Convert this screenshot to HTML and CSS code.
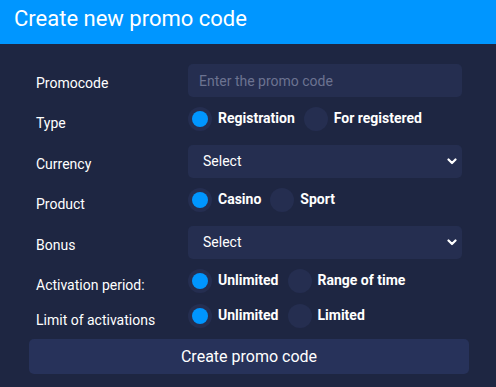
FILE: index.html
```html
<!DOCTYPE html>
<html lang="en">
<head>
<meta charset="utf-8">
<title>Create new promo code</title>
<link rel="stylesheet" href="styles.css">
</head>
<body>
<div class="modal">
  <header class="modal-header">Create new promo code</header>
  <form class="form">
    <div class="row row-field">
      <label class="label">Promocode</label>
      <input class="input" type="text" placeholder="Enter the promo code">
    </div>
    <div class="row row-radio">
      <span class="label">Type</span>
      <div class="radios">
        <label class="radio"><span class="dot checked"></span><span class="radio-text">Registration</span></label>
        <label class="radio"><span class="dot"></span><span class="radio-text">For registered</span></label>
      </div>
    </div>
    <div class="row row-field">
      <span class="label">Currency</span>
      <div class="select"><span>Select</span>
        <svg class="chev" width="10" height="7" viewBox="0 0 10 7"><path d="M1.5 1.5 L5 5 L8.5 1.5" fill="none" stroke="#fff" stroke-width="2.2" stroke-linecap="round" stroke-linejoin="round"/></svg>
      </div>
    </div>
    <div class="row row-radio">
      <span class="label">Product</span>
      <div class="radios">
        <label class="radio"><span class="dot checked"></span><span class="radio-text">Casino</span></label>
        <label class="radio"><span class="dot"></span><span class="radio-text">Sport</span></label>
      </div>
    </div>
    <div class="row row-field">
      <span class="label">Bonus</span>
      <div class="select"><span>Select</span>
        <svg class="chev" width="10" height="7" viewBox="0 0 10 7"><path d="M1.5 1.5 L5 5 L8.5 1.5" fill="none" stroke="#fff" stroke-width="2.2" stroke-linecap="round" stroke-linejoin="round"/></svg>
      </div>
    </div>
    <div class="row row-radio">
      <span class="label">Activation period:</span>
      <div class="radios">
        <label class="radio"><span class="dot checked"></span><span class="radio-text">Unlimited</span></label>
        <label class="radio"><span class="dot"></span><span class="radio-text">Range of time</span></label>
      </div>
    </div>
    <div class="row row-radio">
      <span class="label">Limit of activations</span>
      <div class="radios">
        <label class="radio"><span class="dot checked"></span><span class="radio-text">Unlimited</span></label>
        <label class="radio"><span class="dot"></span><span class="radio-text">Limited</span></label>
      </div>
    </div>
    <button class="submit" type="button">Create promo code</button>
  </form>
</div>
</body>
</html>
```

FILE: styles.css
```css
* { box-sizing: border-box; }
html, body {
  margin: 0;
  padding: 0;
  width: 496px;
  height: 387px;
  overflow: hidden;
  background: #1e2642;
  font-family: Roboto, "Liberation Sans", sans-serif;
  color: #fff;
}
.modal {
  width: 496px;
  height: 387px;
  background: #1e2642;
}
.modal-header {
  height: 44px;
  background: #0096ff;
  color: #fff;
  font-size: 22px;
  line-height: 38px;
  padding-left: 14px;
}
.form {
  padding: 20px 34px 0 29px;
  display: flex;
  flex-direction: column;
  align-items: flex-start;
}
.row {
  display: flex;
  align-items: flex-start;
  width: 100%;
}
.label {
  width: 159px;
  flex: none;
  padding-left: 7px;
  font-size: 14px;
  color: #fff;
}
.row-field { height: 33px; }
.row-field .label { line-height: 33px; padding-top: 3px; }
.row-radio { height: 24px; margin-top: 10px; }
.row-radio + .row-field { margin-top: 14px; }
.row-radio + .row-radio { margin-top: 11px; }
.row-radio .label { line-height: 24px; padding-top: 4px; }
.input, .select {
  flex: 1;
  height: 33px;
  background: #252e50;
  border: 0;
  border-radius: 5px;
  font-family: inherit;
  font-size: 14px;
  color: #fff;
  outline: none;
}
.input { padding: 0 11px; }
.input::placeholder { color: #6c7391; }
.select {
  display: flex;
  align-items: center;
  justify-content: space-between;
  padding: 0 5px 0 15px;
}
.select span { margin-top: -2px; }
.chev { display: block; }
.radios {
  display: flex;
  align-items: center;
  height: 24px;
}
.radio {
  display: flex;
  align-items: center;
  margin-right: 9px;
}
.dot {
  width: 24px;
  height: 24px;
  border-radius: 50%;
  background: #252e50;
  position: relative;
  flex: none;
}
.dot.checked::after {
  content: "";
  position: absolute;
  left: 4px;
  top: 4px;
  width: 16px;
  height: 16px;
  border-radius: 50%;
  background: #0096ff;
}
.radio-text {
  font-size: 14px;
  font-weight: 700;
  margin-left: 6px;
  margin-top: -2px;
}
.submit {
  margin-top: 11px;
  width: 440px;
  height: 35px;
  background: #27325a;
  border: 0;
  border-radius: 5px;
  color: #fff;
  font-family: inherit;
  font-size: 16px;
  padding: 0;
}
```
